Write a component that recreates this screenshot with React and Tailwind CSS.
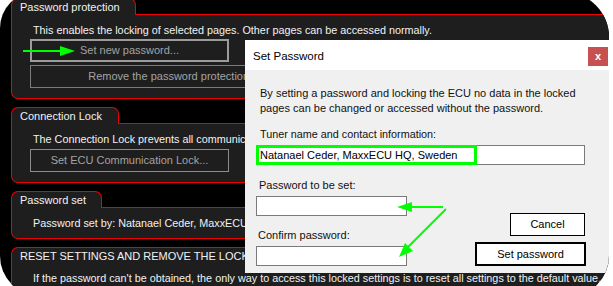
import React from 'react';

const RED = 'border-[#f00000]';

function Panel({ title, tabClass, bodyClass, children }) {
  return (
    <div className="w-[660px]">
      <div className="flex">
        <div className={`h-[17px] border-l border-t border-r ${RED} rounded-t-[7px] bg-[#1e1e1e] pl-2 text-[11px] leading-[16px] text-[#f2f2f2] whitespace-nowrap ${tabClass}`}>
          {title}
        </div>
        <div className={`flex-1 h-[17px] border-b ${RED}`} />
      </div>
      <div className={`border-l border-r border-b ${RED} rounded-b-[7px] bg-[#1e1e1e] ${bodyClass}`}>
        {children}
      </div>
    </div>
  );
}

function DarkButton({ children, className }) {
  return (
    <div className={`ml-[18px] flex items-center justify-center text-[11px] text-[#a3a3a3] whitespace-nowrap overflow-hidden ${className}`}>
      {children}
    </div>
  );
}

function Arrows() {
  return (
    <svg className="absolute top-[8px] left-0 pointer-events-none" width="609" height="286">
      <g stroke="#00ff00" strokeWidth="2" fill="#00ff00">
        <line x1="23" y1="51" x2="62" y2="51" />
        <polygon points="75,51 60,46 60,56" strokeWidth="0" />
        <line x1="443" y1="207" x2="408" y2="207" />
        <polygon points="397,207 412,202 412,212" strokeWidth="0" />
        <line x1="446" y1="209" x2="407" y2="248" />
        <polygon points="399,257 413,251 405,243" strokeWidth="0" />
      </g>
    </svg>
  );
}

function SetPasswordDialog() {
  return (
    <div className="absolute left-[245px] top-[48px] w-[364px] h-[233px] bg-[#f0f0f0] text-[11px] text-[#111] flex flex-col">
      <div className="h-[30px] bg-white flex items-start justify-between pl-2 pr-[1px]">
        <span className="mt-[8px] text-[11.5px] text-black">Set Password</span>
        <div className="mt-[7px] w-[20px] h-[19px] bg-[#c75050] flex items-center justify-center text-white text-[11px] font-bold leading-none">
          x
        </div>
      </div>
      <div className="pt-[16px] pl-[15px] leading-[15px]">
        <p>By setting a password and locking the ECU no data in the locked</p>
        <p>pages can be changed or accessed without the password.</p>
      </div>
      <p className="mt-[11px] pl-[15px] leading-[15px] text-[10.8px]">Tuner name and contact information:</p>
      <div className="mt-[3px] ml-[11px] w-[329px] h-[20px] bg-white border border-[#7a7a7a] flex">
        <span className="-m-px w-[221px] h-[20px] border-[3px] border-[#00ff00] pl-[1px] leading-[14px] text-black">
          Natanael Ceder, MaxxECU HQ, Sweden
        </span>
      </div>
      <div className="flex">
        <div className="flex flex-col">
          <p className="mt-[13px] pl-[14px] leading-[15px]">Password to be set:</p>
          <div className="mt-[3px] ml-[11px] w-[151px] h-[20px] bg-white border border-[#7a7a7a]" />
          <p className="mt-[12px] pl-[13px] leading-[15px]">Confirm password:</p>
          <div className="mt-[3px] ml-[11px] w-[151px] h-[20px] bg-white border border-[#7a7a7a]" />
        </div>
        <div className="ml-auto mr-[23px] flex flex-col items-end justify-end">
          <div className="w-[75px] h-[23px] mr-[1px] bg-white border border-black flex items-center justify-center text-black">
            Cancel
          </div>
          <div className="mt-[6px] w-[111px] h-[24px] bg-white border-2 border-black flex items-center justify-center text-black">
            Set password
          </div>
        </div>
      </div>
    </div>
  );
}

export default function App() {
  return (
    <div className="w-[613px] h-[286px] bg-white overflow-hidden">
      <div className="relative -mt-2 w-[609px] h-[304px] bg-black rounded-tl-[36px] rounded-tr-[45px] rounded-bl-[40px] rounded-br-[40px] overflow-hidden font-['Liberation_Sans',Arial,sans-serif]">
        <div className="pt-[6px] pl-[11px] flex flex-col gap-2">
          <Panel title="Password protection" tabClass="w-[125px]" bodyClass="h-[84px] pt-[8px]">
            <p className="pl-[21px] text-[10.8px] leading-[15px] text-[#f2f2f2] whitespace-nowrap">
              This enables the locking of selected pages. Other pages can be accessed normally.
            </p>
            <DarkButton className="mt-[1px] w-[199px] h-[23px] border-2 border-[#9c9c9c]">
              Set new password...
            </DarkButton>
            <DarkButton className="mt-[3px] w-[300px] h-[23px] border border-[#7c7c7c]">
              Remove the password protection lock
            </DarkButton>
          </Panel>
          <Panel title="Connection Lock" tabClass="w-[108px]" bodyClass="h-[59px] pt-[8px]">
            <p className="pl-[21px] text-[10.8px] leading-[15px] text-[#f2f2f2] whitespace-nowrap">
              The Connection Lock prevents all communication with the ECU without the password.
            </p>
            <DarkButton className="mt-[2px] w-[199px] h-[23px] border border-[#8c8c8c]">
              Set ECU Communication Lock...
            </DarkButton>
          </Panel>
          <Panel title="Password set" tabClass="w-[91px]" bodyClass="h-[31px] pt-[8px]">
            <p className="pl-[21px] text-[10.8px] leading-[15px] text-[#f2f2f2] whitespace-nowrap">
              Password set by: Natanael Ceder, MaxxECU HQ, Sweden
            </p>
          </Panel>
          <Panel title="RESET SETTINGS AND REMOVE THE LOCK" tabClass="w-[420px]" bodyClass="h-[40px] pt-[7px]">
            <p className="pl-[21px] text-[10.8px] leading-[15px] text-[#f2f2f2] whitespace-nowrap">
              If the password can't be obtained, the only way to access this locked settings is to reset all settings to the default value.
            </p>
          </Panel>
        </div>
        <SetPasswordDialog />
        <Arrows />
      </div>
    </div>
  );
}
